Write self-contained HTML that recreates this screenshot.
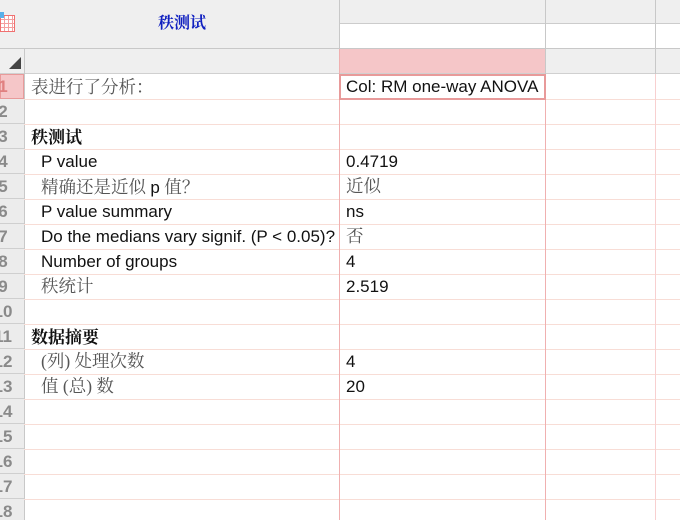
<!DOCTYPE html>
<html><head><meta charset="utf-8"><style>
body{margin:0;width:680px;height:520px;overflow:hidden;background:#fff;position:relative;font-family:"Liberation Sans","Noto Sans CJK SC",sans-serif;}
div{position:absolute;box-sizing:border-box;}
.t{font-size:17px;color:#111;white-space:nowrap;line-height:25px;}
.cn{font-family:"Liberation Serif","Noto Serif CJK SC",serif;color:#555;font-size:17.5px;line-height:27px;}
.b{font-family:"Liberation Serif","Noto Serif CJK SC",serif;font-weight:bold;color:#111;line-height:27px;}
.rn{left:-17px;width:40px;text-align:center;font-size:17px;font-weight:bold;color:#8a8a8a;line-height:26px;}
.hl{left:24px;width:656px;height:1px;background:#f8ddd6;}
</style></head><body>
<div style="left:0;top:0;width:680px;height:49px;background:#efefef;"></div>
<div style="left:340px;top:23px;width:340px;height:26px;background:#fff;border-top:1px solid #ccc;"></div>
<div style="left:0;top:48px;width:680px;height:1px;background:#c8c8c8;"></div>
<div style="left:0;top:49px;width:680px;height:24px;background:#efefef;"></div>
<div style="left:340px;top:49px;width:205px;height:24px;background:#f5c6c8;"></div>
<div style="left:0;top:73px;width:680px;height:1px;background:#d0d0d0;"></div>
<div style="left:0;top:15px;width:15px;height:17px;border:1px solid #f07070;background:repeating-linear-gradient(90deg,transparent 0 3px,#f4a0a0 3px 4px),repeating-linear-gradient(0deg,#fff 0 3px,#f4a0a0 3px 4px);"></div>
<div style="left:0;top:12px;width:4px;height:6px;background:#5ab0e8;"></div>
<div style="left:24px;top:0;width:316px;height:49px;text-align:center;line-height:48px;font-family:'Liberation Serif','Noto Serif CJK SC',serif;font-weight:bold;font-size:16px;color:#1020c0;">秩测试</div>
<div style="left:9px;top:57px;width:0;height:0;border-left:12px solid transparent;border-bottom:12px solid #444;"></div>
<div style="left:0;top:74px;width:24px;height:446px;background:#ececec;"></div>
<div style="left:0;top:74px;width:24px;height:25px;background:#f5c6c8;border:1px solid #e89a9a;"></div>
<div style="left:24px;top:49px;width:1px;height:471px;background:#c8c8c8;"></div>
<div style="left:339px;top:0;width:1px;height:49px;background:#c8c8c8;"></div>
<div style="left:545px;top:0;width:1px;height:74px;background:#c8c8c8;"></div>
<div style="left:655px;top:0;width:1px;height:74px;background:#c8c8c8;"></div>
<div class="hl" style="top:99px"></div><div class="hl" style="top:124px"></div><div class="hl" style="top:149px"></div><div class="hl" style="top:174px"></div><div class="hl" style="top:199px"></div><div class="hl" style="top:224px"></div><div class="hl" style="top:249px"></div><div class="hl" style="top:274px"></div><div class="hl" style="top:299px"></div><div class="hl" style="top:324px"></div><div class="hl" style="top:349px"></div><div class="hl" style="top:374px"></div><div class="hl" style="top:399px"></div><div class="hl" style="top:424px"></div><div class="hl" style="top:449px"></div><div class="hl" style="top:474px"></div><div class="hl" style="top:499px"></div>
<div style="left:339px;top:49px;width:1px;height:471px;background:#f0b0b0;"></div>
<div style="left:545px;top:74px;width:1px;height:446px;background:#f0b0b0;"></div>
<div style="left:655px;top:74px;width:1px;height:446px;background:#f8d0d0;"></div>
<div style="left:0;top:99px;width:24px;height:421px;background:repeating-linear-gradient(180deg,transparent 0 24px,#cfcfcf 24px 25px);"></div>
<div style="left:339px;top:74px;width:207px;height:26px;border:2px solid #e89a9a;background:#fff;"></div>
<div class="rn" style="top:74px;color:#e08080">1</div><div class="rn" style="top:99px">2</div><div class="rn" style="top:124px">3</div><div class="rn" style="top:149px">4</div><div class="rn" style="top:174px">5</div><div class="rn" style="top:199px">6</div><div class="rn" style="top:224px">7</div><div class="rn" style="top:249px">8</div><div class="rn" style="top:274px">9</div><div class="rn" style="top:299px">10</div><div class="rn" style="top:324px">11</div><div class="rn" style="top:349px">12</div><div class="rn" style="top:374px">13</div><div class="rn" style="top:399px">14</div><div class="rn" style="top:424px">15</div><div class="rn" style="top:449px">16</div><div class="rn" style="top:474px">17</div><div class="rn" style="top:499px">18</div>
<div class="t cn" style="left:31px;top:73px">表进行了分析<span style="font-family:'Noto Serif CJK SC'">：</span></div>
<div class="t b" style="left:31px;top:124px">秩测试</div>
<div class="t" style="left:41px;top:149px">P value</div>
<div class="t cn" style="left:41px;top:173px">精确还是近似 <span style="font-family:'Liberation Sans';color:#111;font-size:17px">p</span> 值<span style="font-family:'Noto Serif CJK SC'">？</span></div>
<div class="t" style="left:41px;top:199px">P value summary</div>
<div class="t" style="left:41px;top:224px;width:296px;overflow:hidden">Do the medians vary signif. (P &lt; 0.05)?</div>
<div class="t" style="left:41px;top:249px">Number of groups</div>
<div class="t cn" style="left:41px;top:273px">秩统计</div>
<div class="t b" style="left:31px;top:324px">数据摘要</div>
<div class="t cn" style="left:41px;top:348px">(列) 处理次数</div>
<div class="t cn" style="left:41px;top:373px">值 (总) 数</div>
<div class="t" style="left:346px;top:74px;width:196px;overflow:hidden">Col: RM one-way ANOVA</div>
<div class="t" style="left:346px;top:149px">0.4719</div>
<div class="t cn" style="left:346px;top:173px">近似</div>
<div class="t" style="left:346px;top:199px">ns</div>
<div class="t cn" style="left:346px;top:223px">否</div>
<div class="t" style="left:346px;top:249px">4</div>
<div class="t" style="left:346px;top:274px">2.519</div>
<div class="t" style="left:346px;top:349px">4</div>
<div class="t" style="left:346px;top:374px">20</div>
</body></html>
